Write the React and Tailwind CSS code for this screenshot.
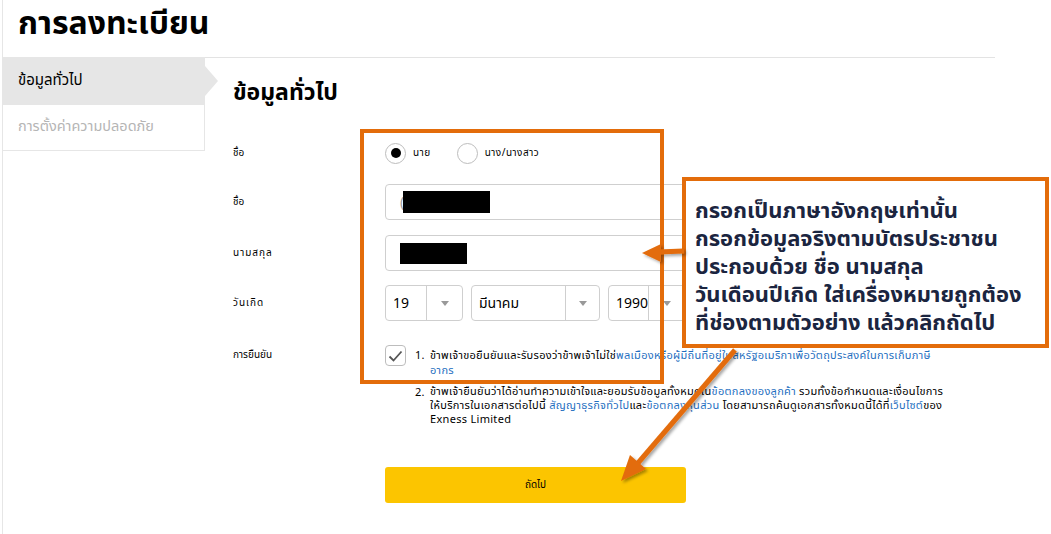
import React from "react";

const FONT = { fontFamily: 'Tahoma, "Noto Sans Thai", "Noto Sans", "DejaVu Sans", sans-serif' };

function Select({ value, w, textW }) {
  return (
    <div className={`flex h-[36px] ${w} rounded-[4px] border border-[#cfcfcf] bg-white`}>
      <div className={`${textW} flex items-center border-r border-[#cfcfcf] pl-[7px] text-[14px] text-black`}>{value}</div>
      <div className="flex flex-1 items-center justify-center">
        <div className="h-0 w-0 border-x-[4px] border-t-[5px] border-x-transparent border-t-[#999]" />
      </div>
    </div>
  );
}

export default function App() {
  return (
    <div className="relative h-[534px] w-[1051px] overflow-hidden bg-white text-black" style={FONT}>
      <div className="ml-[2px] h-full border-l border-[#e6e6e6]">
        {/* header */}
        <div className="h-[57px] pl-[15px] pt-[2px]">
          <h1 className="text-[32px] font-bold leading-[44px]">การลงทะเบียน</h1>
        </div>
        <div className="flex">
          {/* sidebar */}
          <div className="w-[202px] shrink-0">
            <div className="relative flex h-[48px] items-center bg-[#e6e6e6] pl-[15px] text-[15px]">
              ข้อมูลทั่วไป
              <div className="absolute left-[202px] top-[9px] h-0 w-0 border-y-[15px] border-l-[13px] border-y-transparent border-l-[#e6e6e6]" />
            </div>
            <div className="flex h-[46px] items-center border-b border-r border-[#e6e6e6] pl-[15px] text-[14.5px] text-[#b5b5b5]">
              การตั้งค่าความปลอดภัย
            </div>
          </div>
          {/* main */}
          <div className="w-[790px] border-t border-[#e3e3e3] pl-[28px]">
            <h2 className="pt-[20px] text-[23px] font-bold leading-[30px]">ข้อมูลทั่วไป</h2>
            <div className="mt-[32px] flex flex-col">
              {/* title radio row */}
              <div className="flex h-[26px] items-center">
                <div className="w-[152px] text-[10px]">ชื่อ</div>
                <div className="flex items-center">
                  <div className="flex h-[21px] w-[21px] items-center justify-center rounded-full border border-[#bdbdbd]">
                    <div className="h-[10px] w-[10px] rounded-full bg-black" />
                  </div>
                  <span className="ml-[7px] text-[10px] tracking-[0.5px]">นาย</span>
                  <div className="ml-[26px] h-[21px] w-[21px] rounded-full border border-[#bdbdbd]" />
                  <span className="ml-[7px] text-[10px] tracking-[0.5px]">นาง/นางสาว</span>
                </div>
              </div>
              {/* first name */}
              <div className="mt-[18px] flex items-center">
                <div className="w-[152px] text-[10px]">ชื่อ</div>
                <div className="flex h-[36px] w-[301px] items-center rounded-[4px] border border-[#cfcfcf] pl-[14px]">
                  <span className="text-[14px] text-[#999]">(</span>
                  <div className="ml-[-1px] h-[22px] w-[87px] bg-black" />
                </div>
              </div>
              {/* surname */}
              <div className="mt-[15px] flex items-center">
                <div className="w-[152px] text-[10px] tracking-[1px]">นามสกุล</div>
                <div className="flex h-[36px] w-[301px] items-center rounded-[4px] border border-[#cfcfcf] pl-[14px]">
                  <div className="h-[21px] w-[67px] bg-black" />
                </div>
              </div>
              {/* birthday */}
              <div className="mt-[14px] flex items-center">
                <div className="w-[152px] text-[10px] tracking-[1px]">วันเกิด</div>
                <div className="flex gap-[8px]">
                  <Select value="19" w="w-[78px]" textW="w-[41px]" />
                  <Select value="มีนาคม" w="w-[129px]" textW="w-[94px]" />
                  <Select value="1990" w="w-[78px]" textW="w-[40px]" />
                </div>
              </div>
              {/* confirmation */}
              <div className="mt-[24px] flex items-start">
                <div className="w-[152px] pt-[3px] text-[10px]">การยืนยัน</div>
                <div className="flex w-[610px] items-start">
                  <div className="flex h-[21px] w-[21px] shrink-0 items-center justify-center rounded-[4px] border border-[#bdbdbd]">
                    <svg width="15" height="12" viewBox="0 0 15 12">
                      <path d="M1.5 6.5 L5.5 10.5 L13.5 1.5" fill="none" stroke="#555" strokeWidth="1.8" />
                    </svg>
                  </div>
                  <div className="ml-[9px] flex flex-col gap-[7px] pt-[3px] text-[11px] leading-[15px] tracking-[0.3px] whitespace-nowrap">
                    <div className="flex">
                      <span className="w-[15px] shrink-0">1.</span>
                      <span>
                        ข้าพเจ้าขอยืนยันและรับรองว่าข้าพเจ้าไม่ใช่
                        <span className="text-[#1f6fbf]">พลเมืองหรือผู้มีถิ่นที่อยู่ในสหรัฐอเมริกาเพื่อวัตถุประสงค์ในการเก็บภาษี</span>
                        <br />
                        <span className="text-[#1f6fbf]">อากร</span>
                      </span>
                    </div>
                    <div className="flex">
                      <span className="w-[15px] shrink-0">2.</span>
                      <span className="leading-[14px]">
                        ข้าพเจ้ายืนยันว่าได้อ่านทำความเข้าใจและยอมรับข้อมูลทั้งหมดใน
                        <span className="text-[#1f6fbf]">ข้อตกลงของลูกค้า</span> รวมทั้งข้อกำหนดและเงื่อนไขการ
                        <br />
                        ให้บริการในเอกสารต่อไปนี้{" "}
                        <span className="text-[#1f6fbf]">สัญญาธุรกิจทั่วไป</span>และ
                        <span className="text-[#1f6fbf]">ข้อตกลงหุ้นส่วน</span> โดยสามารถค้นดูเอกสารทั้งหมดนี้ได้ที่
                        <span className="text-[#1f6fbf]">เว็บไซต์</span>ของ
                        <br />
                        Exness Limited
                      </span>
                    </div>
                  </div>
                </div>
              </div>
              {/* next button */}
              <div className="mt-[40px] flex">
                <div className="w-[152px]" />
                <button className="flex h-[36px] w-[301px] items-center justify-center rounded-[3px] bg-[#fcc500] text-[10px]">
                  ถัดไป
                </button>
              </div>
            </div>
          </div>
        </div>
      </div>

      {/* annotation: orange highlight rectangle */}
      <div className="absolute left-[360px] top-[129px] h-[255px] w-[304px] border-[4px] border-[#e36c0a]" />

      {/* annotation: callout */}
      <div className="absolute left-[682px] top-[177px] h-[171px] w-[367px] border-[4px] border-[#e36c0a] bg-white pl-[9px] pt-[17px] text-[22px] font-bold leading-[28px] text-[#1b2540] whitespace-nowrap">
        <div>กรอกเป็นภาษาอังกฤษเท่านั้น</div>
        <div>กรอกข้อมูลจริงตามบัตรประชาชน</div>
        <div>ประกอบด้วย ชื่อ นามสกุล</div>
        <div>วันเดือนปีเกิด ใส่เครื่องหมายถูกต้อง</div>
        <div>ที่ช่องตามตัวอย่าง แล้วคลิกถัดไป</div>
      </div>

      {/* annotation arrows */}
      <svg className="pointer-events-none absolute left-0 top-0" width="1051" height="534">
        <defs>
          <filter id="sh" x="-20%" y="-20%" width="140%" height="140%">
            <feDropShadow dx="2" dy="2" stdDeviation="1.5" floodColor="#000" floodOpacity="0.35" />
          </filter>
        </defs>
        <g filter="url(#sh)">
          <line x1="684" y1="251" x2="658" y2="252" stroke="#e36c0a" strokeWidth="5" />
          <polygon points="642,253 661,244 661,262" fill="#e36c0a" />
          <line x1="735" y1="350" x2="638" y2="463" stroke="#e36c0a" strokeWidth="5" />
          <polygon points="621,481 630,455 646,469" fill="#e36c0a" />
        </g>
      </svg>
    </div>
  );
}
